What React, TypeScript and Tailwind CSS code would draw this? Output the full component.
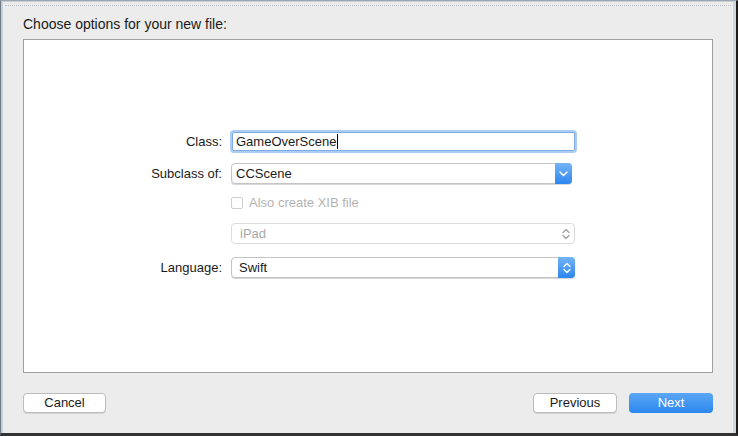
import React from "react";

function ChevronDown() {
  return (
    <svg width="9" height="6" viewBox="0 0 9 6">
      <path d="M1 1 L4.5 4.5 L8 1" stroke="white" strokeWidth="1.5" fill="none" strokeLinecap="round" strokeLinejoin="round" />
    </svg>
  );
}

function UpDown({ color }: { color: string }) {
  return (
    <svg width="8" height="12" viewBox="0 0 8 12">
      <path d="M1 4.5 L4 1.5 L7 4.5" stroke={color} strokeWidth="1.3" fill="none" strokeLinecap="round" strokeLinejoin="round" />
      <path d="M1 7.5 L4 10.5 L7 7.5" stroke={color} strokeWidth="1.3" fill="none" strokeLinecap="round" strokeLinejoin="round" />
    </svg>
  );
}

export default function App() {
  return (
    <div className="w-[738px] h-[436px] box-border bg-[#ececec] border-t border-t-[#9ea7b0] border-l border-l-[#6f7983] border-r-2 border-r-[#1c1c1c] border-b-[3px] border-b-[#333333] flex overflow-hidden font-['Liberation_Sans',Arial,sans-serif] text-[13px] text-[#1a1a1a]">
      <div className="flex-1 flex flex-col box-border border-t border-t-[#c6ced5] border-l-2 border-l-[#c5d0da] border-r-[3px] border-r-[#cdd8e1] pl-[20px] pr-[20px]">
        <div className="mt-[3px] -mx-[18px] h-0 border-t border-dotted border-t-[#b9bfc5]" />
        <div className="mt-[10px] h-[16px] leading-[16px] text-[14px]">Choose options for your new file:</div>
        <div className="mt-[7px] h-[334px] box-border bg-white border border-[#a0a0a0] flex flex-col pt-[90px]">
          {/* Class */}
          <div className="flex items-center h-[23px]">
            <div className="w-[198px] text-right">Class:</div>
            <div className="ml-[8px] w-[347px] h-[23px] box-border p-[2px] rounded-[4px] bg-[#abcdf4]">
              <div className="h-full box-border bg-white border border-[#7faae2] rounded-[2px] flex items-center pl-[3px]">
                <span>GameOverScene</span>
                <span className="inline-block w-px h-[15px] bg-black ml-[1px]" />
              </div>
            </div>
          </div>
          {/* Subclass */}
          <div className="flex items-center h-[21px] mt-[10px]">
            <div className="w-[198px] text-right">Subclass of:</div>
            <div className="ml-[9px] w-[341px] h-[21px] box-border bg-white border border-[#c4c4c4] rounded-[4px] flex items-stretch shadow-[0_1px_0_#d8d8d8]">
              <div className="flex-1 flex items-center pl-[4px]">CCScene</div>
              <div className="w-[17px] -my-px -mr-px rounded-r-[4px] bg-gradient-to-b from-[#74b3f7] to-[#2a86ee] flex items-center justify-center">
                <ChevronDown />
              </div>
            </div>
          </div>
          {/* Checkbox */}
          <div className="flex items-center h-[14px] mt-[12px]">
            <div className="w-[198px]" />
            <div className="ml-[9px] w-[12px] h-[12px] box-border bg-white border border-[#cfcfcf] rounded-[2px]" />
            <div className="ml-[6px] text-[#b3b3b3]">Also create XIB file</div>
          </div>
          {/* iPad */}
          <div className="flex items-center h-[21px] mt-[13px]">
            <div className="w-[198px]" />
            <div className="ml-[9px] w-[344px] h-[21px] box-border bg-white border border-[#dcdcdc] rounded-[4px] flex items-center">
              <div className="flex-1 pl-[8px] text-[#a9a9a9]">iPad</div>
              <div className="w-[17px] flex items-center justify-center">
                <UpDown color="#a0a0a0" />
              </div>
            </div>
          </div>
          {/* Language */}
          <div className="flex items-center h-[21px] mt-[13px]">
            <div className="w-[198px] text-right">Language:</div>
            <div className="ml-[9px] w-[344px] h-[21px] box-border bg-white border border-[#c4c4c4] rounded-[4px] flex items-stretch shadow-[0_1px_0_#d8d8d8]">
              <div className="flex-1 flex items-center pl-[7px]">Swift</div>
              <div className="w-[17px] -my-px -mr-px rounded-r-[4px] bg-gradient-to-b from-[#74b3f7] to-[#2a86ee] flex items-center justify-center">
                <UpDown color="white" />
              </div>
            </div>
          </div>
        </div>
        <div className="mt-[20px] h-[20px] flex justify-between">
          <div className="w-[83px] h-[20px] box-border bg-white border border-[#bcbcbc] rounded-[4px] flex items-center justify-center shadow-[0_1px_0_#d4d4d4]">Cancel</div>
          <div className="flex gap-[12px]">
            <div className="w-[84px] h-[20px] box-border bg-white border border-[#bcbcbc] rounded-[4px] flex items-center justify-center shadow-[0_1px_0_#d4d4d4]">Previous</div>
            <div className="w-[84px] h-[20px] box-border rounded-[4px] bg-gradient-to-b from-[#5ba6f5] to-[#2a88ef] text-white flex items-center justify-center">Next</div>
          </div>
        </div>
      </div>
    </div>
  );
}
